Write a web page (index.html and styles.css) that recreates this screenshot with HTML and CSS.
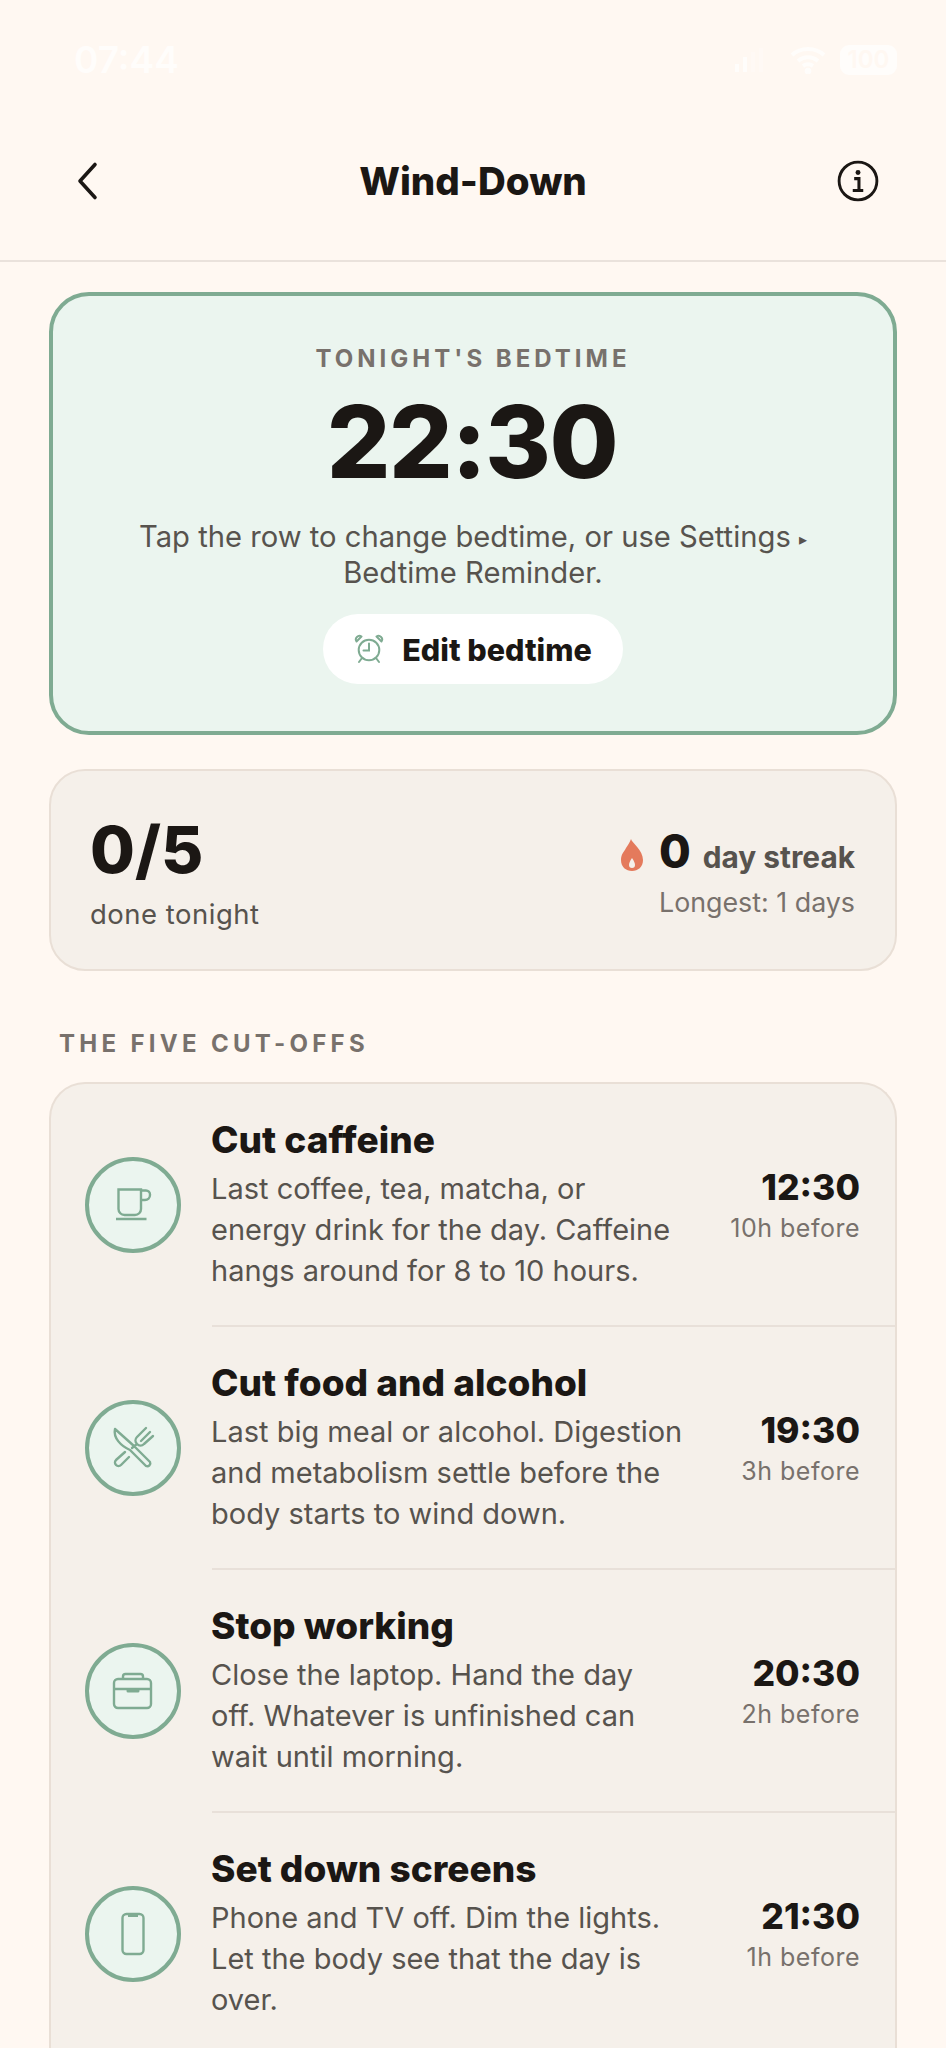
FILE: index.html
```html
<!DOCTYPE html>
<html lang="en">
<head>
<meta charset="utf-8">
<title>Wind-Down</title>
<link rel="stylesheet" href="styles.css">
</head>
<body>
<div class="status">
  <span class="clock">07:44</span>
  <div class="status-icons">
    <svg class="signal" viewBox="0 0 33 24"><rect x="2" y="16" width="4" height="8"/><rect x="10" y="9" width="4" height="15"/><rect x="18" y="4" width="4" height="20" opacity=".3"/><rect x="26" y="0" width="4" height="24" opacity=".3"/></svg>
    <svg class="wifi" viewBox="0 0 36 28"><path d="M2 9c9-8 23-8 32 0M8 15c6-5 14-5 20 0M13 20c3-2 7-2 10 0" fill="none" stroke-width="4"/><circle cx="18" cy="25" r="3"/></svg>
    <span class="battery">100</span>
  </div>
</div>
<header class="topbar">
  <svg class="back" viewBox="0 0 24 40"><path d="M20 3.500 5 20l15 16.500" fill="none" stroke-width="3.600" stroke-linecap="round" stroke-linejoin="round"/></svg>
  <h1 class="title">Wind-Down</h1>
  <svg class="info" viewBox="0 0 44 44"><circle cx="22" cy="22" r="19.800" fill="none" stroke-width="3"/><circle cx="22" cy="13" r="2.600" class="solid"/><path d="M18 19.500h5V31M16.500 32h11" fill="none" stroke-width="3.200"/></svg>
</header>
<main class="content">
  <section class="hero">
    <div class="eyebrow">TONIGHT'S BEDTIME</div>
    <div class="bedtime">22:30</div>
    <p class="hero-note">Tap the row to change bedtime, or use Settings <span class="arrow">▸</span> Bedtime Reminder.</p>
    <button class="edit">
      <svg class="alarm" viewBox="0 0 30 30"><circle cx="15" cy="16" r="10.300" fill="none" stroke-width="2"/><path d="M15 9.500V16.500H9.500M8 24l-3 4M22 24l3 4" fill="none" stroke-width="2" stroke-linecap="round"/><path d="M2.500 7.500a3.600 3.600 0 0 1 5-5zM27.500 7.500a3.600 3.600 0 0 0-5-5z" fill="none" stroke-width="2" stroke-linejoin="round"/></svg>
      <span>Edit bedtime</span>
    </button>
  </section>
  <section class="stats">
    <div>
      <div class="count">0/5</div>
      <div class="count-label">done tonight</div>
    </div>
    <div class="streak">
      <div class="streak-top">
        <svg class="flame" viewBox="0 0 24 32"><path fill-rule="evenodd" d="M11 0c1 4 12 11 12 21 0 7-5 11-11 11S1 28 1 21c0-6 3-8 5-12 2-3 4-6 5-9zM12 19c-2 3-3 5-3 7a3 3 0 0 0 6 0c0-2-1-4-3-7z"/></svg>
        <span class="streak-num">0</span>
        <span class="streak-label">day streak</span>
      </div>
      <div class="longest">Longest: 1 days</div>
    </div>
  </section>
  <h2 class="section-label">THE FIVE CUT-OFFS</h2>
  <section class="list">
    <article class="row">
      <div class="badge"><svg viewBox="0 0 40 40"><path d="M5.500 4.500H28V24a6 6 0 0 1-6 6H11.500a6 6 0 0 1-6-6zM28 5.500h5a4 4 0 0 1 4 4v.500a5 5 0 0 1-5 5H28M3 34h30.500" fill="none" stroke-width="2.400"/></svg></div>
      <div class="body">
        <h3>Cut caffeine</h3>
        <p>Last coffee, tea, matcha, or energy drink for the day. Caffeine hangs around for 8 to 10 hours.</p>
      </div>
      <div class="when"><strong>12:30</strong><span>10h before</span></div>
    </article>
    <article class="row">
      <div class="badge"><svg viewBox="0 0 40 40"><path d="M2 1 21 18l16 16a3 3 0 0 1-4 4L17 22C8 18 0 10 2 1zM12 24l-9 8a3.500 3.500 0 0 0 5 5l8-8M33 0l-9 9c-2 2-2 5 0 7s5 2 7 0l9-8M37 4l-9 9M24 16l-5 4" fill="none" stroke-width="2.400" stroke-linejoin="round" stroke-linecap="round"/></svg></div>
      <div class="body">
        <h3>Cut food and alcohol</h3>
        <p>Last big meal or alcohol. Digestion and metabolism settle before the body starts to wind down.</p>
      </div>
      <div class="when"><strong>19:30</strong><span>3h before</span></div>
    </article>
    <article class="row">
      <div class="badge"><svg viewBox="0 0 40 40"><rect x="1" y="8" width="37" height="29" rx="4" fill="none" stroke-width="2.400"/><path d="M10 8V5.500A2.500 2.500 0 0 1 12.500 3h15A2.500 2.500 0 0 1 30 5.500V8M1 18h37" fill="none" stroke-width="2.400"/><rect x="13.500" y="18" width="13" height="3.500" rx="1.500" class="solid"/></svg></div>
      <div class="body">
        <h3>Stop working</h3>
        <p>Close the laptop. Hand the day off. Whatever is unfinished can wait until morning.</p>
      </div>
      <div class="when"><strong>20:30</strong><span>2h before</span></div>
    </article>
    <article class="row">
      <div class="badge"><svg viewBox="0 0 40 40"><rect x="9.500" y="0" width="21" height="40" rx="4" fill="none" stroke-width="2.400"/><path d="M15 1h10v2H15z" class="solid"/></svg></div>
      <div class="body">
        <h3>Set down screens</h3>
        <p>Phone and TV off. Dim the lights. Let the body see that the day is over.</p>
      </div>
      <div class="when"><strong>21:30</strong><span>1h before</span></div>
    </article>
  </section>
</main>
</body>
</html>
```
FILE: styles.css
```css
* { box-sizing: border-box; }
html, body { margin: 0; height: 2048px; overflow: hidden; }
body {
  background: #fff8f2;
  color: #1b1714;
  font-family: Inter, "Liberation Sans", sans-serif;
}
.status {
  height: 120px;
  padding: 40px 49px 0 74px;
  display: flex;
  justify-content: space-between;
  align-items: flex-start;
  color: #fffdfb;
}
.clock { font-size: 37px; font-weight: 600; line-height: 40px; }
.status-icons { display: flex; align-items: center; height: 40px; }
.signal { width: 33px; height: 24px; fill: #fffdfb; margin-right: 24px; }
.wifi { width: 36px; height: 28px; fill: #fffdfb; stroke: #fffdfb; margin-right: 14px; }
.battery {
  width: 57px; height: 30px; border-radius: 9px;
  background: #fffdfb; color: #fff8f2;
  font-size: 24px; font-weight: 600; line-height: 30px; text-align: center;
}
.topbar {
  height: 142px;
  padding: 0 67px 18px 75px;
  border-bottom: 2px solid #eae2dc;
  display: flex;
  align-items: center;
  justify-content: space-between;
  position: relative;
}
.back { width: 24px; height: 40px; stroke: #1b1714; }
.title { position: absolute; left: 0; right: 0; margin: 0; text-align: center; font-size: 38.500px; font-weight: 800; }
.info { width: 42px; height: 42px; stroke: #1b1714; color: #1b1714; }
.solid { fill: currentColor; stroke: none; }
.content { padding: 30px 49px 0; }
.hero {
  height: 443px;
  border: 4px solid #7fab92;
  border-radius: 40px;
  background: #ebf5ef;
  display: flex;
  flex-direction: column;
  align-items: center;
  padding-top: 49px;
}
.eyebrow { font-size: 24px; font-weight: 700; letter-spacing: 4px; color: #78716c; line-height: 28px; }
.bedtime { font-size: 100px; font-weight: 800; line-height: 112px; margin-top: 13px; padding-right: 2px; letter-spacing: -1.400px; }
.hero-note {
  margin: 22px 0 0;
  width: 700px;
  text-align: center;
  font-size: 29.200px;
  line-height: 33px;
  color: #57534e;
}
.arrow { font-size: 16px; vertical-align: 2px; }
.edit {
  margin-top: 25px;
  width: 300px;
  height: 70px;
  border: 0;
  border-radius: 35px;
  background: #fff;
  display: flex;
  align-items: center;
  justify-content: center;
  gap: 18px;
  font: 800 30.500px Inter, sans-serif;
  color: #1b1714;
}
.alarm { width: 30px; height: 30px; stroke: #7fab92; }
.stats {
  margin-top: 34px;
  height: 202px;
  border: 2px solid #e9dfd6;
  border-radius: 36px;
  background: #f5f0ea;
  padding: 44px 40px 0 39px;
  display: flex;
  justify-content: space-between;
}
.count { font-size: 65px; font-weight: 800; line-height: 70px; }
.count-label { font-size: 27.500px; line-height: 34px; color: #57534e; margin-top: 12px; letter-spacing: .5px; }
.streak { text-align: right; }
.streak-top { display: flex; justify-content: flex-end; align-items: baseline; gap: 12px; height: 62px; padding-top: 8px; }
.flame { width: 24px; height: 32px; fill: #e47a5c; margin: 10px 3px 0 0; align-self: center; }
.streak-num { font-size: 46px; font-weight: 800; line-height: 56px; }
.streak-label { font-size: 29.800px; font-weight: 700; color: #57534e; }
.longest { font-size: 26.800px; line-height: 34px; color: #78716c; margin-top: 8px; }
.section-label {
  margin: 59px 0 0 10px;
  font-size: 24px;
  line-height: 28px;
  font-weight: 700;
  letter-spacing: 4.300px;
  color: #78716c;
}
.list {
  margin-top: 24px;
  border: 2px solid #e9dfd6;
  border-bottom: 0;
  border-radius: 36px 36px 0 0;
  background: #f5f0ea;
  min-height: 1000px;
}
.row {
  position: relative;
  height: 243px;
  padding: 0 35px 0 34px;
  display: flex;
  align-items: center;
}
.row + .row::before {
  content: "";
  position: absolute;
  top: -2px;
  left: 161px;
  right: 0;
  height: 2px;
  background: #e8e0d9;
}
.badge {
  flex: none;
  width: 96px;
  height: 96px;
  border: 4px solid #7fab92;
  border-radius: 50%;
  background: #ebf5ef;
  display: flex;
  align-items: center;
  justify-content: center;
  margin: 0 30px 2px 0;
  color: #7fab92;
}
.badge svg { width: 40px; height: 40px; stroke: #7fab92; overflow: visible; }
.body { flex: 1; min-width: 0; margin-bottom: 3px; }
.body h3 { margin: 0; font-size: 37px; font-weight: 800; line-height: 46px; }
.body p { margin: 5px 0 0; width: 472px; font-size: 29px; line-height: 41px; color: #57534e; }
.when { flex: none; display: flex; flex-direction: column; align-items: flex-end; align-self: flex-start; margin-top: 82px; }
.when strong { font-size: 35.500px; font-weight: 800; line-height: 44px; }
.when span { font-size: 25px; line-height: 36px; color: #78716c; letter-spacing: .5px; }
```
